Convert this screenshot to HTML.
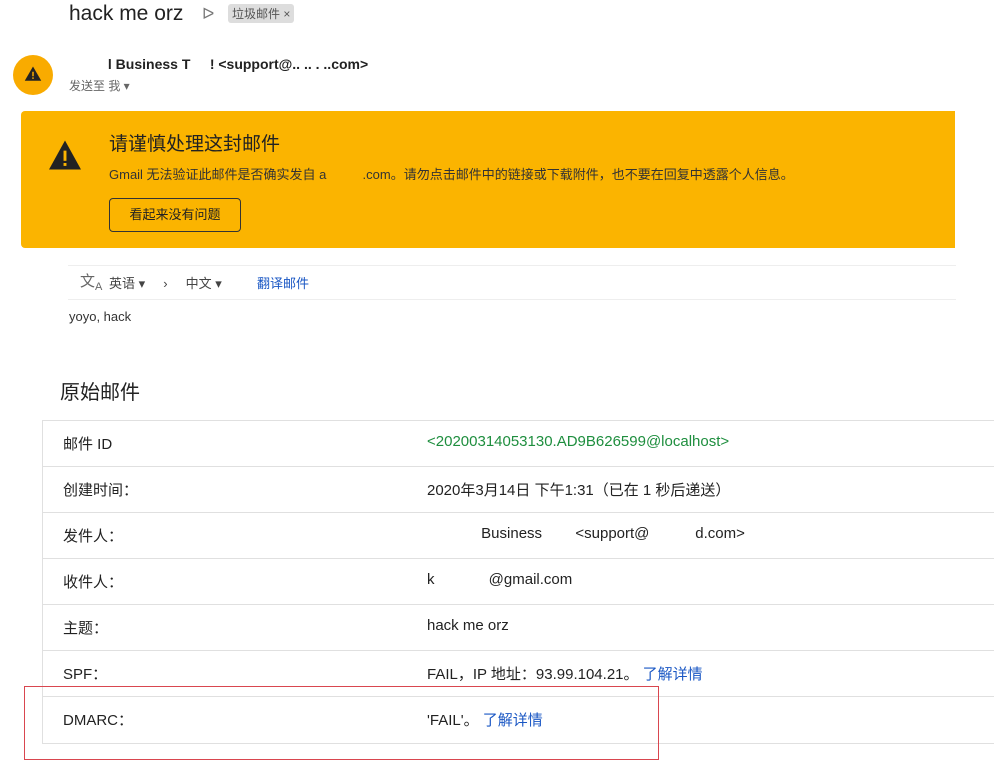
<!DOCTYPE html>
<html><head><meta charset="utf-8"><style>
body{margin:0;width:994px;height:768px;background:#fff;font-family:"Liberation Sans","Noto Sans CJK SC",sans-serif;position:relative;overflow:hidden;color:#222}
.a{position:absolute;white-space:nowrap}
.row{position:absolute;left:42px;width:960px;height:46px;border-top:1px solid #e0e0e0;border-left:1px solid #e0e0e0}
.row .k{position:absolute;left:20px;top:12px;font-size:15px;color:#222}
.row .v{position:absolute;left:384px;top:12px;font-size:15px;color:#222}
.link{color:#1a57c4}
</style></head><body>
<div class="a" style="left:69px;top:2px;font-size:21px;color:#222">hack me orz</div>
<div class="a" style="left:202px;top:4px;font-size:16px;color:#777">ᐅ</div>
<div class="a" style="left:228px;top:4px;background:#ddd;border-radius:3px;padding:1px 4px;font-size:12px;color:#555">垃圾邮件 ×</div>
<div class="a" style="left:13px;top:55px;width:40px;height:40px;border-radius:50%;background:#f9ab00"></div>
<svg class="a" style="left:24px;top:65px" width="18" height="18" viewBox="0 0 24 24"><path d="M1 21h22L12 2z" fill="#222"/><rect x="11" y="9" width="2" height="6" fill="#f9ab00"/><rect x="11" y="16.5" width="2" height="2" fill="#f9ab00"/></svg>
<div class="a" style="left:69px;top:56px;font-size:14px;font-weight:bold;color:#222">&nbsp;&nbsp;&nbsp;&nbsp;&nbsp;&nbsp;&nbsp;&nbsp;&nbsp;&nbsp;l Business T &nbsp;&nbsp;&nbsp;&nbsp;! &lt;support@.. .. . ..com&gt;</div>
<div class="a" style="left:69px;top:77px;font-size:12px;color:#666">发送至 我 ▾</div>
<div class="a" style="left:21px;top:111px;width:934px;height:137px;background:#fbb400;border-radius:4px 0 0 4px"></div>
<svg class="a" style="left:47px;top:139px" width="36" height="32" viewBox="0 0 24 22"><path d="M1 21h22L12 1z" fill="#222"/><rect x="11" y="8" width="2" height="7" fill="#fbb400"/><rect x="11" y="16.5" width="2" height="2" fill="#fbb400"/></svg>
<div class="a" style="left:109px;top:129px;font-size:19px;color:#222">请谨慎处理这封邮件</div>
<div class="a" style="left:109px;top:164px;font-size:13px;color:#333">Gmail 无法验证此邮件是否确实发自 a&nbsp;&nbsp;&nbsp;&nbsp;&nbsp;&nbsp;&nbsp;&nbsp;&nbsp;&nbsp;.com。请勿点击邮件中的链接或下载附件，也不要在回复中透露个人信息。</div>
<div class="a" style="left:109px;top:198px;width:130px;height:32px;border:1px solid #333;border-radius:4px;font-size:13px;line-height:32px;text-align:center;color:#222">看起来没有问题</div>
<div class="a" style="left:68px;top:265px;width:888px;height:33px;border-top:1px solid #eee;border-bottom:1px solid #eee"></div>
<div class="a" style="left:80px;top:270px;font-size:15px;color:#666">文<sub style="font-size:11px">A</sub></div>
<div class="a" style="left:109px;top:273px;font-size:13px;color:#444">英语 ▾ &nbsp;&nbsp;&nbsp;&nbsp;› &nbsp;&nbsp;&nbsp;&nbsp;中文 ▾</div>
<div class="a link" style="left:257px;top:273px;font-size:13px">翻译邮件</div>
<div class="a" style="left:69px;top:309px;font-size:13px;color:#333">yoyo, hack</div>
<div class="a" style="left:60px;top:376px;font-size:20px;color:#222">原始邮件</div>
<div class="row" style="top:420px"><span class="k a">邮件 ID</span><span class="v a" style="color:#1e8e3e">&lt;20200314053130.AD9B626599@localhost&gt;</span></div>
<div class="row" style="top:466px"><span class="k a">创建时间：</span><span class="v a">2020年3月14日 下午1:31（已在 1 秒后递送）</span></div>
<div class="row" style="top:512px"><span class="k a">发件人：</span><span class="v a">&nbsp;&nbsp;&nbsp;&nbsp;&nbsp;&nbsp;&nbsp;&nbsp;&nbsp;&nbsp;&nbsp;&nbsp;&nbsp;Business &nbsp;&nbsp;&nbsp;&nbsp;&nbsp;&nbsp;&nbsp;&lt;support@&nbsp;&nbsp;&nbsp;&nbsp;&nbsp;&nbsp;&nbsp;&nbsp;&nbsp;&nbsp;&nbsp;d.com&gt;</span></div>
<div class="row" style="top:558px"><span class="k a">收件人：</span><span class="v a">k&nbsp;&nbsp;&nbsp;&nbsp;&nbsp;&nbsp;&nbsp;&nbsp;&nbsp;&nbsp;&nbsp;&nbsp;&nbsp;@gmail.com</span></div>
<div class="row" style="top:604px"><span class="k a">主题：</span><span class="v a">hack me orz</span></div>
<div class="row" style="top:650px"><span class="k a">SPF：</span><span class="v a">FAIL，IP 地址：93.99.104.21。 <span class="link">了解详情</span></span></div>
<div class="row" style="top:696px;border-bottom:1px solid #e0e0e0"><span class="k a">DMARC：</span><span class="v a">'FAIL'。 <span class="link">了解详情</span></span></div>
<div class="a" style="left:24px;top:686px;width:633px;height:72px;border:1px solid #d9464f"></div>
</body></html>
